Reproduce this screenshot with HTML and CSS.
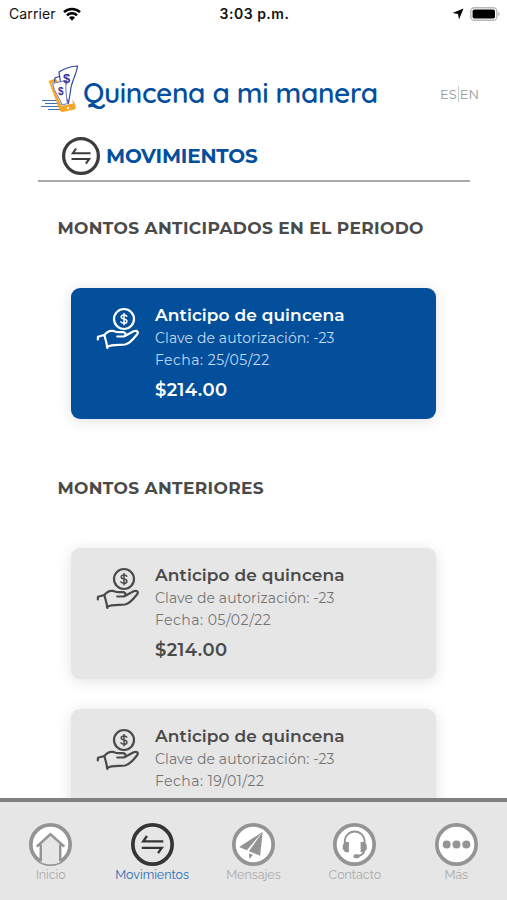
FILE: index.html
```html
<!DOCTYPE html>
<html lang="es">

<head>
  <meta charset="UTF-8">
  <meta name="viewport" content="width=device-width, initial-scale=1.0">
  <title>Quincena a mi manera</title>
  <link rel="stylesheet" href="styles.css">
</head>

<body>
  <!-- Shared icons -->
  <svg class="sprite" width="0" height="0">
    <symbol id="icon-hand" viewBox="0 0 44 44">
      <g fill="none" stroke="currentColor" stroke-width="2.200" stroke-linecap="round" stroke-linejoin="round">
        <circle cx="28" cy="12" r="10"/>
        <path d="M30.800 9.200c-.8-.9-1.800-1.200-2.900-1.200-1.600 0-2.700.8-2.700 2 0 2.900 5.700 1.300 5.700 4.200 0 1.300-1.200 2.100-2.900 2.100-1.300 0-2.400-.5-3.100-1.400M28 6.500v11.300" stroke-width="1.500"/>
        <path d="M1.800 32.500l.2-2.800 6.300-1.700 1.800 6.500 1.400 6.500"/>
        <path d="M8.300 28.200c2.500-3.500 5.500-4.800 8.500-4.300 2 .3 3 1.300 5.300 1.300h4.700c3.500.3 3.700 3.800.5 4.300h-6"/>
        <path d="M29.800 28.500l7.800-4.200c3.700-1.500 5.300.8 3.300 3.200-3.400 4.300-6.500 8.700-11.800 10-6 .8-12.200-.6-18.200 2.200"/>
      </g>
    </symbol>
    <symbol id="icon-arrows" viewBox="0 0 42 42">
      <circle cx="21" cy="21" r="19.200" fill="var(--disc)" stroke="currentColor" stroke-width="3.600"/>
      <path d="M31.500 17.900H12l3.600-5.200M10.500 24.300H30l-3.600 5.200" fill="none" stroke="currentColor" stroke-width="2.300"/>
    </symbol>
  </svg>

  <div class="app">
    <header class="status-bar">
      <div class="status-left">
        <span>Carrier</span>
        <svg width="20" height="14" viewBox="0 0 18 14">
          <g fill="none" stroke="#000" stroke-width="2.500">
            <path d="M1 5.200a11.300 11.300 0 0 1 16 0"/>
            <path d="M4 8.400a7 7 0 0 1 10 0"/>
          </g>
          <path d="M9 13.800l-3-3.200a4.200 4.200 0 0 1 6 0z"/>
        </svg>
      </div>
      <span class="status-time">3:03 p.m.</span>
      <div class="status-right">
        <svg width="12" height="12" viewBox="0 0 12 12">
          <path d="M11.500.5L7 11.500 6 6 .5 5z"/>
        </svg>
        <svg width="30" height="14" viewBox="0 0 30 14">
          <rect x=".8" y=".8" width="26" height="12.400" rx="3.500" fill="#fff" stroke="#b8b8b8" stroke-width="1.400"/>
          <rect x="2.600" y="2.400" width="22.400" height="9.200" rx="1.800"/>
          <path d="M28.200 4.800c2 .8 2 3.600 0 4.400z" fill="#b8b8b8"/>
        </svg>
      </div>
    </header>

    <main class="content">
      <div class="brand">
        <svg class="brand-logo" width="40" height="50" viewBox="0 0 40 50">
          <g stroke="#3a6fb0" stroke-width="1">
            <path d="M1 36.500h16M4 39.500h14M0 42.500h19M7 45.500h12"/>
          </g>
          <path d="M7.500 17l7-2.500L33 38l2 5.500-1.500 2-12 2.500-2.500-1z" fill="#f6a623"/>
          <path d="M10 19l17-2 5 22.500L20.500 42z" fill="#fff"/>
          <path d="M18 8c6-4 12-5.800 18.500-6C35.500 11 30 18 29.500 27l-2 12L20 22z" fill="#fff" stroke="#3445a5" stroke-width="1.200"/>
          <path d="M13.500 18l.5-4 4-1.500" fill="none" stroke="#3445a5" stroke-width="1.200"/>
          <path d="M11.500 19.500l13.500-3c-.5 8 0 15 1.500 23L21 41c-2-7-8-13-9.500-21.500z" fill="#fff" stroke="#6674b8" stroke-width="1"/>
          <text class="logo-sign" x="22" y="18.500">$</text>
          <text class="logo-sign logo-sign-small" x="17" y="30.500">$</text>
          <circle cx="27" cy="44" r="1.200" fill="#fff"/>
        </svg>
        <h1 class="brand-name">Quincena a mi manera</h1>
        <div class="language"><span>ES</span><span class="language-divider"></span><span>EN</span></div>
      </div>

      <div class="page-title">
        <svg class="page-icon" width="38" height="38"><use href="#icon-arrows"/></svg>
        <h2>MOVIMIENTOS</h2>
      </div>

      <h3 class="section-title section-current">MONTOS ANTICIPADOS EN EL PERIODO</h3>
      <article class="card card-active">
        <svg class="card-icon" width="44" height="44"><use href="#icon-hand"/></svg>
        <div class="card-text">
          <h4>Anticipo de quincena</h4>
          <p class="card-key">Clave de autorización: -23</p>
          <p class="card-date">Fecha: 25/05/22</p>
          <strong>$214.00</strong>
        </div>
      </article>

      <h3 class="section-title section-previous">MONTOS ANTERIORES</h3>
      <article class="card">
        <svg class="card-icon" width="44" height="44"><use href="#icon-hand"/></svg>
        <div class="card-text">
          <h4>Anticipo de quincena</h4>
          <p class="card-key">Clave de autorización: -23</p>
          <p class="card-date">Fecha: 05/02/22</p>
          <strong>$214.00</strong>
        </div>
      </article>
      <article class="card">
        <svg class="card-icon" width="44" height="44"><use href="#icon-hand"/></svg>
        <div class="card-text">
          <h4>Anticipo de quincena</h4>
          <p class="card-key">Clave de autorización: -23</p>
          <p class="card-date">Fecha: 19/01/22</p>
        </div>
      </article>
    </main>

    <nav class="tab-bar">
      <a class="tab">
        <svg width="43" height="43" viewBox="0 0 42 42">
          <circle cx="21" cy="21" r="19.200" fill="#fff" stroke="#949494" stroke-width="3.600"/>
          <path d="M21 11L11 20v18c6 3 14 3 20 0V20z" fill="#e6e6e6"/>
          <path d="M7.500 23L21 11l13.500 12M11.500 21v16.500M30.500 21v16.500" fill="none" stroke="#949494" stroke-width="2.400"/>
        </svg>
        <span>Inicio</span>
      </a>
      <a class="tab tab-active">
        <svg width="43" height="43"><use href="#icon-arrows"/></svg>
        <span>Movimientos</span>
      </a>
      <a class="tab">
        <svg width="43" height="43" viewBox="0 0 42 42">
          <circle cx="21" cy="21" r="19.200" fill="#fff" stroke="#949494" stroke-width="3.600"/>
          <path d="M30 8.500L7 23.500l7.500 3zM30 8.500L16.500 27.500l11 4.500zM16.500 29.500l4 1.700-3.500 4z" fill="#949494"/>
        </svg>
        <span>Mensajes</span>
      </a>
      <a class="tab">
        <svg width="43" height="43" viewBox="0 0 42 42">
          <circle cx="21" cy="21" r="19.200" fill="#fff" stroke="#949494" stroke-width="3.600"/>
          <path d="M11.500 21v-3a9.700 9.700 0 0 1 19.400 0v3M30.500 26c0 4-3 6-7 6.200" fill="none" stroke="#949494" stroke-width="1.800"/>
          <path d="M15.500 18.500h-3.500l-2.500 3v4l2.500 3h3.500zM27 18.500h3.500l2.500 3v4l-2.500 3H27z" fill="#949494"/>
          <rect x="20" y="30.500" width="6" height="4" rx="2" fill="#949494"/>
        </svg>
        <span>Contacto</span>
      </a>
      <a class="tab">
        <svg width="43" height="43" viewBox="0 0 42 42">
          <circle cx="21" cy="21" r="19.200" fill="#fff" stroke="#949494" stroke-width="3.600"/>
          <g fill="#949494">
            <circle cx="11.400" cy="21" r="3.900"/>
            <circle cx="21" cy="21" r="3.900"/>
            <circle cx="30.600" cy="21" r="3.900"/>
          </g>
        </svg>
        <span>Más</span>
      </a>
    </nav>
  </div>
</body>

</html>
```
FILE: styles.css
```css
* {
  box-sizing: border-box;
}

body {
  margin: 0;
  font-family: "Montserrat", "Inter", sans-serif;
  color: #4a4a4a;
  background-color: #fff;
}

h1,
h2,
h3,
h4,
p {
  margin: 0;
}

.sprite {
  display: block;
}

.app {
  display: flex;
  flex-direction: column;
  height: 900px;
  overflow: hidden;
}

/* Status bar */
.status-bar {
  display: grid;
  grid-template-columns: 1fr auto 1fr;
  align-items: center;
  height: 27px;
  padding: 0 7px 0 9px;
  font-family: "Inter", sans-serif;
  font-size: 14px;
  color: #111;
}

.status-left,
.status-right {
  display: flex;
  align-items: center;
  gap: 6px;
}

.status-left {
  letter-spacing: 0.1px;
}

.status-right {
  justify-content: flex-end;
}

.status-time {
  font-weight: 600;
  letter-spacing: 0.5px;
}

/* Page header */
.content {
  flex: 1;
  min-height: 0;
  overflow: hidden;
}

.brand {
  display: flex;
  align-items: center;
  height: 70px;
  margin-top: 29px;
  padding: 0 28px 0 41px;
}

.brand-logo {
  flex-shrink: 0;
  margin-top: -4px;
}

.logo-sign {
  font: bold 13px "Liberation Sans", sans-serif;
  fill: #2b3a9b;
}

.logo-sign-small {
  font-size: 10px;
}

.brand-name {
  margin: 3px 0 0 2px;
  font-family: "Quicksand", "Montserrat", "Inter", sans-serif;
  font-size: 28px;
  font-weight: 600;
  line-height: 34px;
  letter-spacing: -0.4px;
  white-space: nowrap;
  color: #034f9e;
}

.language {
  display: flex;
  margin: 6px 0 0 auto;
  font-size: 13px;
  line-height: 16px;
  color: #999;
}

.language-divider {
  width: 1px;
  margin: 0 1px;
  background-color: #ccc;
}

.page-title {
  display: flex;
  align-items: center;
  gap: 6px;
  height: 56px;
  margin: 0 37px 0 38px;
  padding: 5px 0 0 24px;
  border-bottom: 2px solid #aaa;
}

.page-icon {
  --disc: #fff;
  color: #3c3c3c;
}

.page-title h2 {
  margin-top: 1px;
  font-size: 20px;
  font-weight: 700;
  line-height: 24px;
  letter-spacing: -0.2px;
  color: #034f9e;
}

.section-title {
  margin-left: 57.5px;
  font-size: 17px;
  font-weight: 700;
  line-height: 22px;
  letter-spacing: 0.35px;
}

.section-current {
  margin-top: 35px;
}

.section-previous {
  margin-top: 58px;
}

/* Cards */
.card {
  display: flex;
  gap: 15px;
  width: 365px;
  height: 131px;
  margin: 30px 0 0 71px;
  padding: 16px 25px;
  border-radius: 9px;
  background-color: #e6e6e6;
  box-shadow: 0 2px 14px rgba(0, 0, 0, 0.12);
}

.section-title + .card {
  margin-top: 49px;
}

.card-icon {
  flex-shrink: 0;
  margin-top: 3px;
}

.card h4 {
  font-size: 17px;
  font-weight: 600;
  line-height: 22px;
  letter-spacing: 0.1px;
}

.card p {
  font-size: 14px;
  font-weight: 400;
  line-height: 22px;
  color: #747474;
}

.card p.card-key {
  margin-top: 1px;
  letter-spacing: 0.1px;
}

.card p.card-date {
  letter-spacing: 0.5px;
}

.card strong {
  display: block;
  margin-top: 8px;
  font-size: 18px;
  font-weight: 600;
  line-height: 22px;
  letter-spacing: 0.4px;
}

.card-active {
  color: #fff;
  background-color: #034f9b;
}

.card-active p {
  color: #c3dcf3;
}

/* Bottom navigation */
.tab-bar {
  display: grid;
  grid-template-columns: repeat(5, 1fr);
  flex-shrink: 0;
  height: 102px;
  padding-top: 21px;
  border-top: 4px solid #808080;
  background-color: #e6e6e6;
}

.tab {
  display: flex;
  flex-direction: column;
  align-items: center;
  font-family: "Raleway", "Montserrat", "Inter", sans-serif;
  font-size: 12.5px;
  line-height: 17px;
  color: #aaa;
}

.tab-active svg {
  --disc: #e6e6e6;
  color: #353535;
}

.tab-active {
  color: #2c6fb5;
}
```
